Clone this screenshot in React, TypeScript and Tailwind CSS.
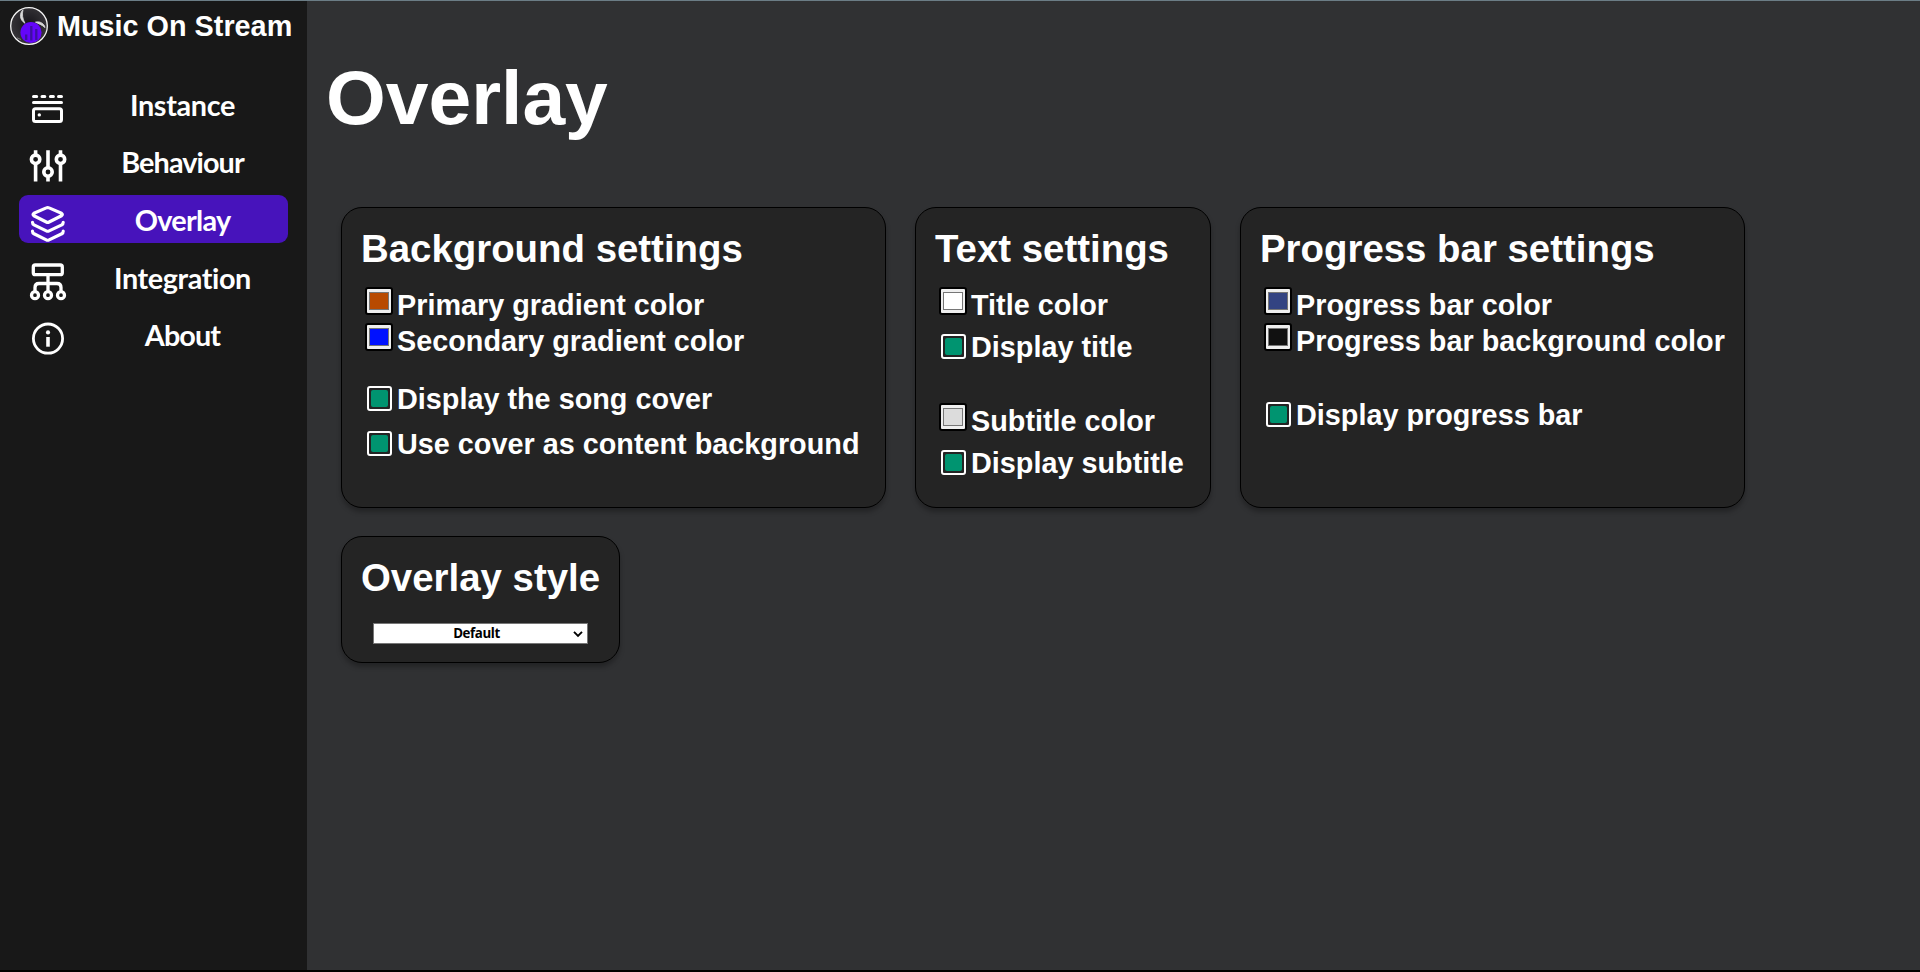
import React from 'react';

function LogoMark() {
  return (
    <svg width="40" height="40" viewBox="0 0 40 40" className="shrink-0">
      <defs>
        <radialGradient id="disc" cx="50%" cy="45%" r="55%">
          <stop offset="0" stopColor="#17151a" />
          <stop offset="1" stopColor="#39373b" />
        </radialGradient>
      </defs>
      <circle cx="20" cy="20" r="18.3" fill="url(#disc)" stroke="#f4f4f4" strokeWidth="1.3" />
      <path d="M14 3.8C10.5 7 10 13.5 16 17.3C13.5 13 12.8 8 14 3.8Z" fill="#d9d9d9" stroke="#d9d9d9" strokeWidth="0.8" />
      <path d="M26.5 16.2C31 15 35 17.500 36 21.500C33 18.800 30 17.800 26.500 16.2Z" fill="#d9d9d9" stroke="#d9d9d9" strokeWidth="1" />
      <path d="M8 31.800L12 33.500" stroke="#8a8a8a" strokeWidth="0.8" />
      <circle cx="22" cy="26.500" r="10.600" fill="#6405fa" />
      <path d="M17.200 34V28.500M22.300 34.500V20M27.300 34V23" stroke="#3d0fa0" strokeWidth="2.300" />
    </svg>
  );
}

const stroke = {
  fill: 'none',
  stroke: '#fff',
  strokeWidth: 3,
  strokeLinecap: 'round' as const,
  strokeLinejoin: 'round' as const,
};

function InstanceIcon() {
  return (
    <svg width="40" height="48" viewBox="0 0 40 48" className="shrink-0">
      <g {...stroke}>
        <path d="M5.500 16.400H8.700M14 16.400H16.800M22.400 16.400H25.400M30.500 16.400H33.500" />
        <path d="M5.500 22.600H33.500" />
        <rect x="5.500" y="28.700" width="28" height="12.700" rx="2" />
      </g>
      <circle cx="11.300" cy="34.900" r="1.700" fill="#fff" />
    </svg>
  );
}

function BehaviourIcon() {
  return (
    <svg width="40" height="48" viewBox="0 0 40 48" className="shrink-0">
      <g {...stroke} strokeWidth={3.6} strokeLinecap="butt">
        <path d="M7.600 13.200V18M7.600 26.500V44.500M20 13.200V31M20 39V44.500M32.500 13.200V18M32.500 26.500V44.500" />
        <circle cx="7.600" cy="22.300" r="4.200" />
        <circle cx="20" cy="35" r="4.200" />
        <circle cx="32.500" cy="22.300" r="4.200" />
      </g>
    </svg>
  );
}

function OverlayIcon() {
  return (
    <svg width="40" height="48" viewBox="0 0 40 48" className="shrink-0">
      <g {...stroke} strokeWidth={3.2}>
        <path d="M18.300 12.900Q19.700 12.200 21.100 12.900L33.500 18.200Q35.200 19.400 33.500 20.700L21.100 27Q19.700 27.700 18.300 27L5.900 20.700Q4.200 19.400 5.900 18.200Z" />
        <path d="M4.500 27.300Q4.500 29 6 29.900L18.300 35.900Q19.700 36.600 21.100 35.900L33.800 29.900Q35.200 29 35.200 27.300" />
        <path d="M4.500 36.200Q4.500 37.900 6 38.800L18.300 44.900Q19.700 45.600 21.100 44.900L33.800 38.800Q35.200 37.900 35.200 36.200" />
      </g>
    </svg>
  );
}

function IntegrationIcon() {
  return (
    <svg width="40" height="48" viewBox="0 0 40 48" className="shrink-0">
      <g {...stroke} strokeWidth={3.3} strokeLinecap="butt">
        <rect x="5.300" y="12" width="29" height="9.700" rx="2" />
        <path d="M20 22V38M7 39V34.500Q7 30.500 11 30.500H29Q33 30.500 33 34.500V39" />
        <circle cx="7" cy="42.200" r="3.500" />
        <circle cx="20" cy="42.200" r="3.500" />
        <circle cx="33" cy="42.200" r="3.500" />
      </g>
    </svg>
  );
}

function AboutIcon() {
  return (
    <svg width="40" height="48" viewBox="0 0 40 48" className="shrink-0">
      <circle cx="20" cy="28.600" r="14.600" {...stroke} strokeWidth={2.800} />
      <circle cx="20" cy="22.400" r="2.100" fill="#fff" />
      <path d="M20 27V36.700" stroke="#fff" strokeWidth="3.600" />
    </svg>
  );
}

const navItems = [
  { label: 'Instance', Icon: InstanceIcon, spacing: 'tracking-[-0.35px]' },
  { label: 'Behaviour', Icon: BehaviourIcon, spacing: 'tracking-[-0.9px]' },
  { label: 'Overlay', Icon: OverlayIcon, active: true, spacing: 'tracking-[-0.7px]' },
  { label: 'Integration', Icon: IntegrationIcon, spacing: 'tracking-[-0.4px]' },
  { label: 'About', Icon: AboutIcon, spacing: 'tracking-[-0.9px]' },
];

function Sidebar() {
  return (
    <aside className="w-[307px] shrink-0 bg-[#181818]">
      <div className="flex h-[50px] items-center pl-[9px]">
        <LogoMark />
        <span className="ml-2 whitespace-nowrap text-[28.8px] leading-[34px] font-bold">Music On Stream</span>
      </div>
      <nav className="mt-[28.8px] ml-[19px] flex w-[269px] flex-col gap-[9.6px]">
        {navItems.map(({ label, Icon, active, spacing }) => (
          <a key={label} className={`flex h-12 rounded-[9px] pl-[9px] ${active ? 'bg-[#4713bb]' : ''}`}>
            <Icon />
            <span className={`ml-[11px] w-[207px] text-center font-[Lato,sans-serif] text-[28.8px] leading-[50px] font-bold ${spacing}`}>
              {label}
            </span>
          </a>
        ))}
      </nav>
    </aside>
  );
}

function Card({ title, className, children }: { title: string; className: string; children: React.ReactNode }) {
  return (
    <section className={`rounded-[21px] border border-black bg-[#242424] pt-[18px] shadow-[0_4px_5px_rgba(0,0,0,0.28)] ${className}`}>
      <h2 className="pl-[19px] whitespace-nowrap text-[38.4px] leading-[45px] font-bold">{title}</h2>
      {children}
    </section>
  );
}

function ColorRow({ label, fill, className = '' }: { label: string; fill: string; className?: string }) {
  return (
    <div className={`ml-[23px] flex h-9 ${className}`}>
      <span className="flex size-7 shrink-0 items-center justify-center rounded-[3px] border-2 border-black bg-[#efefef]">
        <span className={`h-[18px] w-5 border border-[#767676] ${fill}`} />
      </span>
      <span className="ml-1 whitespace-nowrap text-[28.8px] leading-9 font-bold">{label}</span>
    </div>
  );
}

function CheckRow({ label, className = '' }: { label: string; className?: string }) {
  return (
    <div className={`ml-[25px] flex h-[26px] ${className}`}>
      <span className="flex size-[25px] shrink-0 items-center justify-center rounded-[3px] border-2 border-white">
        <span className="size-[17px] rounded-[2px] bg-[#009470]" />
      </span>
      <span className="ml-[5px] whitespace-nowrap text-[28.8px] leading-[26px] font-bold">{label}</span>
    </div>
  );
}

export default function App() {
  return (
    <div className="flex h-[972px] w-[1920px] flex-col overflow-hidden border-t border-b-2 border-t-[#6b7d86] border-b-black bg-[#303133] font-['Liberation_Sans',Arial,sans-serif] text-white">
      <div className="flex flex-1">
        <Sidebar />
        <main className="flex flex-col">
          <h1 className="mt-[51px] ml-[19px] text-[76.8px] leading-[90px] font-bold">Overlay</h1>
          <div className="mt-[65px] ml-[34px] flex gap-[29px]">
            <Card title="Background settings" className="h-[301px] w-[545px]">
              <ColorRow label="Primary gradient color" fill="bg-[#b84a00]" className="mt-4" />
              <ColorRow label="Secondary gradient color" fill="bg-[#0011ff]" />
              <CheckRow label="Display the song cover" className="mt-[27px]" />
              <CheckRow label="Use cover as content background" className="mt-[19px]" />
            </Card>
            <Card title="Text settings" className="h-[301px] w-[296px]">
              <ColorRow label="Title color" fill="bg-white" className="mt-4" />
              <CheckRow label="Display title" className="mt-[11px]" />
              <ColorRow label="Subtitle color" fill="bg-[#dcdcdc]" className="mt-[43px]" />
              <CheckRow label="Display subtitle" className="mt-[11px]" />
            </Card>
            <Card title="Progress bar settings" className="h-[301px] w-[505px]">
              <ColorRow label="Progress bar color" fill="bg-[#334382]" className="mt-4" />
              <ColorRow label="Progress bar background color" fill="bg-[#111111]" />
              <CheckRow label="Display progress bar" className="mt-[43px]" />
            </Card>
          </div>
          <div className="mt-7 ml-[34px] flex">
            <Card title="Overlay style" className="h-[127px] w-[279px]">
              <button className="mt-[23px] ml-[31px] flex h-[21px] w-[215px] items-center border border-[#767676] bg-white pr-[4px] text-black">
                <span className="flex-1 pl-[6px] text-center font-['Open_Sans',sans-serif] text-[13.3px] leading-[19px] font-bold tracking-[-0.4px]">Default</span>
                <svg width="10" height="8" viewBox="0 0 10 8">
                  <path d="M1 1.800L5 5.800L9 1.800" fill="none" stroke="#000" strokeWidth="1.900" />
                </svg>
              </button>
            </Card>
          </div>
        </main>
      </div>
    </div>
  );
}
